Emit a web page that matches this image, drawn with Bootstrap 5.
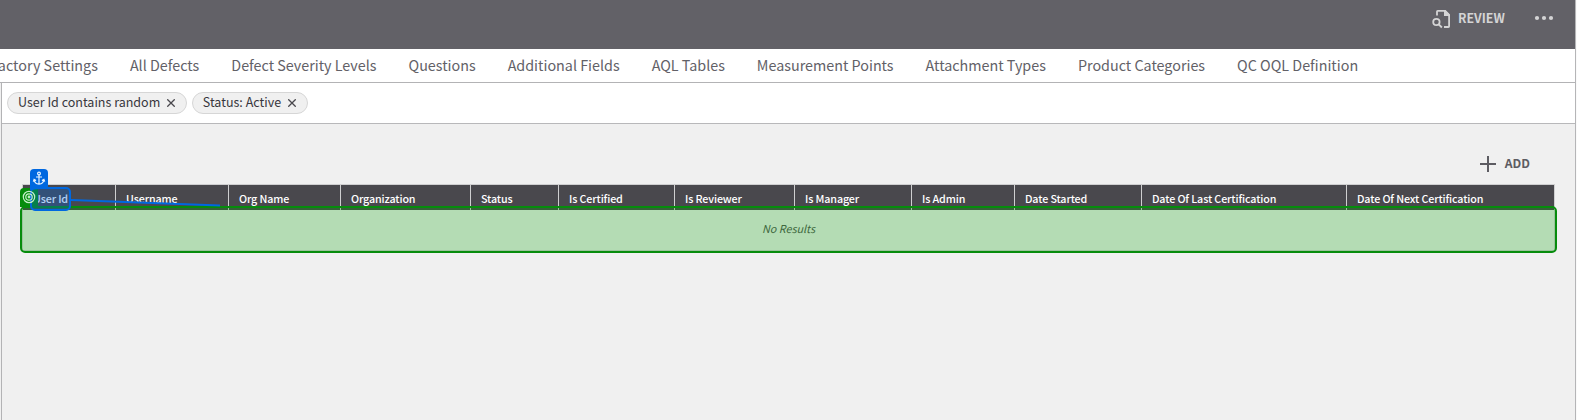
<!DOCTYPE html>
<html lang="en">
<head>
<meta charset="utf-8">
<meta name="viewport" content="width=device-width, initial-scale=1">
<title>Users</title>
<link href="https://cdn.jsdelivr.net/npm/bootstrap@5.3.0/dist/css/bootstrap.min.css" rel="stylesheet">
<style>
  body { font-family: "Noto Sans CJK SC", "Open Sans", sans-serif; background: #fafafa; height: 420px; overflow: hidden; }
  .app { width: 1576px; height: 420px; border-right: 1px solid #b5b5b7; background: #f0f0f0; overflow: hidden; }
  .topbar { height: 49px; background: #626167; color: #d4d4d5; padding: 6px 21px 0 0; }
  .topbar-action { width: 102px; height: 24px; font-size: 12.4px; font-weight: 700; line-height: 24px; }
  .topbar-action span { margin-left: 6px; }
  .tabs { height: 34px; background: #fff; border-bottom: 1px solid #b3b3b5; gap: 32px; margin-left: -9.5px; }
  .tabs a { color: #626167; font-size: 14.33px; line-height: 31px; padding: 0; white-space: nowrap; flex: none; }
  .content { height: 337px; border-left: 1px solid #b3b3b5; margin-left: 1px; }
  .filters { height: 41px; background: #fff; border-bottom: 1px solid #b8b8ba; padding: 9px 0 0 5px; gap: 5px; }
  .chip { height: 22px; border: 1px solid #d6d6d6; border-radius: 11px; background: #f0f0f0; color: #38373d; font-size: 12.53px; line-height: 18px; padding: 0 10.5px 0 10px; white-space: nowrap; }
  .chip span { padding-bottom: 2px; }
  .chip svg { margin-left: 7px; }
  .toolbar { height: 60px; padding: 28px 45px 0 0; }
  .add { height: 24px; color: #5d5c62; font-size: 12.2px; font-weight: 700; line-height: 22px; }
  .add span { margin-left: 9px; padding-bottom: 2px; }
  .grid-wrap { position: relative; width: 1533px; margin-left: 20px; }
  .grid { table-layout: fixed; width: 1533px; border-collapse: collapse; border: 1px solid #cfcfd0; }
  .grid th { height: 25px; padding: 4px 0 0 10px; background: #49484d; color: #fff; font-size: 10.74px; letter-spacing: -.13px; font-weight: 500; line-height: 20px; border-left: 1px solid #cfcfd0; white-space: nowrap; }
  .grid td { height: 41px; padding: 0 0 3px; text-align: center; font-style: italic; font-size: 10.8px; line-height: 20px; background: #f0f0f0; color: #555; }
  .mark-layer { position: absolute; left: -22px; top: -184px; pointer-events: none; }
</style>
</head>
<body>
<div class="app">
  <header class="topbar d-flex justify-content-end">
    <div class="topbar-action d-flex">
      <svg width="20" height="24" viewBox="0 0 20 24" fill="none" stroke="#d4d4d5" stroke-width="1.8"><path d="M5 9.500V5.600Q5 4.900 5.700 4.900H13l4.100 4.100V20.300Q17.100 21 16.400 21H12"/><path d="M12 4h1.500l4.500 4.500V10h-6z" fill="#d4d4d5" stroke="none"/><circle cx="4.400" cy="16" r="3.200"/><path d="M6.700 18.300l3.200 3.200"/></svg>
      <span>REVIEW</span>
    </div>
    <svg width="20" height="24" viewBox="0 0 20 24" fill="#d4d4d5"><circle cx="3" cy="12" r="2.1"/><circle cx="10" cy="12" r="2.1"/><circle cx="17" cy="12" r="2.1"/></svg>
  </header>
  <nav class="tabs nav flex-nowrap">
    <a class="nav-link" href="#">Factory Settings</a><a class="nav-link" href="#">All Defects</a><a class="nav-link" href="#">Defect Severity Levels</a><a class="nav-link" href="#">Questions</a><a class="nav-link" href="#">Additional Fields</a><a class="nav-link" href="#">AQL Tables</a><a class="nav-link" href="#">Measurement Points</a><a class="nav-link" href="#">Attachment Types</a><a class="nav-link" href="#">Product Categories</a><a class="nav-link" href="#">QC OQL Definition</a>
  </nav>
  <main class="content">
    <div class="filters d-flex">
      <div class="chip d-flex align-items-center"><span>User Id contains random</span><svg width="8" height="8" viewBox="0 0 8 8" stroke="#49484d" stroke-width="1.3"><path d="M.3.300l7.400 7.400M7.700.300l-7.400 7.400"/></svg></div>
      <div class="chip d-flex align-items-center"><span>Status: Active</span><svg width="8" height="8" viewBox="0 0 8 8" stroke="#49484d" stroke-width="1.3"><path d="M.3.300l7.400 7.400M7.700.300l-7.400 7.400"/></svg></div>
    </div>
    <div class="toolbar d-flex justify-content-end">
      <div class="add d-flex align-items-center"><svg width="16" height="16" viewBox="0 0 16 16" stroke="#5d5c62" stroke-width="2"><path d="M8 0v16M0 8h16"/></svg><span>ADD</span></div>
    </div>
    <div class="grid-wrap">
      <table class="grid">
        <colgroup><col style="width:93px"><col style="width:113px"><col style="width:112px"><col style="width:130px"><col style="width:88px"><col style="width:116px"><col style="width:120px"><col style="width:117px"><col style="width:103px"><col style="width:127px"><col style="width:205px"><col></colgroup>
        <thead><tr><th>User Id</th><th>Username</th><th>Org Name</th><th>Organization</th><th>Status</th><th>Is Certified</th><th>Is Reviewer</th><th>Is Manager</th><th>Is Admin</th><th>Date Started</th><th>Date Of Last Certification</th><th>Date Of Next Certification</th></tr></thead>
        <tbody><tr><td colspan="12">No Results</td></tr></tbody>
      </table>
      <svg class="mark-layer" width="1575" height="260" viewBox="0 0 1575 260" fill="none">
        <rect x="21" y="207" width="1535" height="45" rx="4" fill="#00a000" fill-opacity=".25" stroke="#068c0c" stroke-width="2"/>
        <path d="M20 207v-15q0-4 4-4h14v19z" fill="#068c0c"/>
        <rect x="31" y="188" width="39" height="22" rx="4" fill="#0068e0" fill-opacity=".3" stroke="#0068e0" stroke-width="2"/>
        <path d="M30 190v-17q0-4 4-4h10q4 0 4 4v15z" fill="#0068e0"/>
        <path d="M71 200L220 205.500" stroke="#0068e0" stroke-width="2"/>
        <g stroke="#e8f4ff" stroke-width="1.200"><circle cx="39" cy="173.500" r="1.400"/><path d="M39 175v8.800M36 177h6M34.200 179.800q.3 4 4.800 4.300q4.500-.3 4.800-4.300M33.300 181.600l.8-2.200 2 1.200M44.700 181.600l-.8-2.200-2 1.200"/></g>
        <g stroke="#c4f0c8" stroke-width="1.200"><circle cx="29" cy="197" r="5.700"/><circle cx="29" cy="197" r="3.200"/><circle cx="29" cy="197" r=".8"/></g>
      </svg>
    </div>
  </main>
</div>
<script src="https://cdn.jsdelivr.net/npm/bootstrap@5.3.0/dist/js/bootstrap.bundle.min.js"></script>
</body>
</html>
